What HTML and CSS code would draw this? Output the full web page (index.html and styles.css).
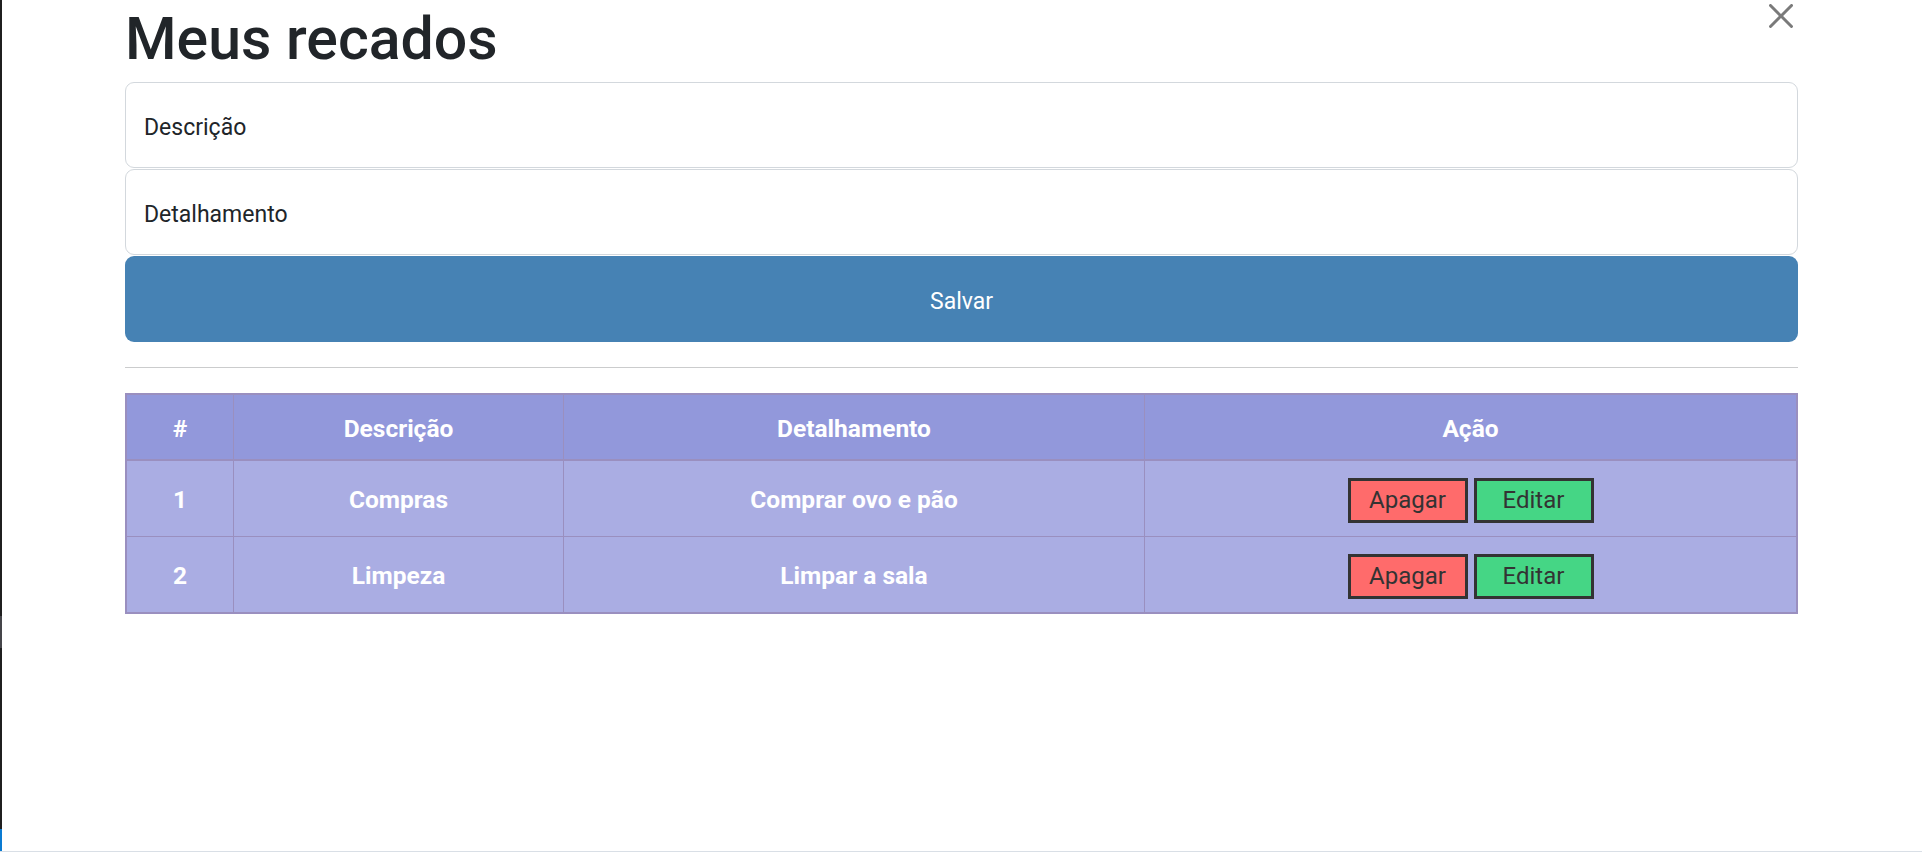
FILE: index.html
```html
<!DOCTYPE html>
<html lang="pt-BR">
<head>
<meta charset="utf-8">
<title>Meus recados</title>
<link rel="stylesheet" href="styles.css">
</head>
<body>
<div class="window">
  <div class="edge">
    <span class="edge-top"></span>
    <span class="edge-thumb"></span>
    <span class="edge-fill"></span>
    <span class="edge-blue"></span>
  </div>
  <main class="page">
    <div class="container">
      <header class="header">
        <h1 class="title">Meus recados</h1>
        <button class="btn-close" type="button" aria-label="Fechar">
          <svg width="24" height="24" viewBox="0 0 16 16" aria-hidden="true"><path fill="#000" fill-opacity="0.52" d="M.293.293a1 1 0 0 1 1.414 0L8 6.586 14.293.293a1 1 0 1 1 1.414 1.414L9.414 8l6.293 6.293a1 1 0 0 1-1.414 1.414L8 9.414l-6.293 6.293a1 1 0 0 1-1.414-1.414L6.586 8 .293 1.707a1 1 0 0 1 0-1.414z"/></svg>
        </button>
      </header>
      <form class="form">
        <div class="field">
          <input class="field-input" id="descricao" type="text">
          <label class="field-label" for="descricao">Descrição</label>
        </div>
        <div class="field">
          <input class="field-input" id="detalhamento" type="text">
          <label class="field-label" for="detalhamento">Detalhamento</label>
        </div>
        <button class="btn-save" type="button">Salvar</button>
      </form>
      <hr class="divider">
      <table class="table">
        <colgroup>
          <col class="col-id">
          <col class="col-desc">
          <col class="col-det">
          <col>
        </colgroup>
        <thead>
          <tr class="head-row">
            <th>#</th>
            <th>Descrição</th>
            <th>Detalhamento</th>
            <th>Ação</th>
          </tr>
        </thead>
        <tbody>
          <tr class="body-row">
            <td>1</td>
            <td>Compras</td>
            <td>Comprar ovo e pão</td>
            <td><div class="actions"><button class="btn btn-delete" type="button">Apagar</button><button class="btn btn-edit" type="button">Editar</button></div></td>
          </tr>
          <tr class="body-row">
            <td>2</td>
            <td>Limpeza</td>
            <td>Limpar a sala</td>
            <td><div class="actions"><button class="btn btn-delete" type="button">Apagar</button><button class="btn btn-edit" type="button">Editar</button></div></td>
          </tr>
        </tbody>
      </table>
    </div>
  </main>
</div>
</body>
</html>
```

FILE: styles.css
```css
html, body {
  margin: 0;
  padding: 0;
  background: #ffffff;
}

body {
  font-family: Roboto, "Liberation Sans", sans-serif;
  color: #212529;
}

.window {
  display: flex;
  height: 852px;
  box-sizing: border-box;
  border-bottom: 1px solid #d9dfe6;
  overflow: hidden;
}

.edge {
  width: 2px;
  flex-shrink: 0;
  display: flex;
  flex-direction: column;
}

.edge-top {
  height: 616px;
  background: #1f1f1f;
}

.edge-thumb {
  height: 32px;
  background: #45454a;
}

.edge-fill {
  flex: 1;
  background: #1f1f1f;
}

.edge-blue {
  height: 22px;
  background: #0a7bd2;
}

.page {
  flex: 1;
  min-width: 0;
}

.container {
  width: 1673px;
  margin-left: 123px;
}

.header {
  display: flex;
  justify-content: space-between;
  align-items: flex-start;
  padding-top: 3px;
  margin-bottom: 7px;
}

.title {
  margin: 0;
  font-size: 59px;
  line-height: 72px;
  font-weight: 500;
  color: #212529;
}

.btn-close {
  margin: 1px 5px 0 0;
  padding: 0;
  border: 0;
  background: none;
  width: 24px;
  height: 24px;
  cursor: pointer;
}

.btn-close svg {
  display: block;
}

.form {
  display: flex;
  flex-direction: column;
  gap: 1px;
  margin: 0;
}

.field {
  position: relative;
  height: 86px;
  box-sizing: border-box;
  border: 1px solid #d3d8dd;
  border-radius: 9px;
  background: #ffffff;
}

.field-input {
  display: block;
  width: 100%;
  height: 100%;
  box-sizing: border-box;
  border: 0;
  border-radius: 9px;
  background: transparent;
  padding: 0 18px;
  font: 23px Roboto, "Liberation Sans", sans-serif;
  outline: none;
}

.field-label {
  position: absolute;
  top: 0;
  left: 0;
  padding: 28px 18px 0;
  font-size: 23px;
  line-height: 34.5px;
  color: #212529;
  pointer-events: none;
}

.btn-save {
  height: 86px;
  width: 100%;
  border: 0;
  border-radius: 9px;
  background: #4682b4;
  color: #ffffff;
  font: 23px/34.5px Roboto, "Liberation Sans", sans-serif;
  padding: 7px 0 0;
  cursor: pointer;
}

.divider {
  margin: 25px 0;
  border: 0;
  height: 1px;
  background: #cbcccd;
}

.table {
  width: 100%;
  table-layout: fixed;
  border-collapse: separate;
  border-spacing: 0;
  border: 2px solid #9a8fbf;
  background: #aaade3;
  color: #ffffff;
  font-size: 24.5px;
  font-weight: 700;
  line-height: 36px;
}

.col-id { width: 107px; }
.col-desc { width: 330px; }
.col-det { width: 581px; }

.table th,
.table td {
  padding: 3px 0 0;
  text-align: center;
  vertical-align: middle;
  border-right: 1px solid #9a8fbf;
  border-bottom: 1px solid #9a8fbf;
}

.table th:last-child,
.table td:last-child {
  border-right: 0;
}

.table th {
  background: #9298db;
  border-bottom-width: 2px;
}

.head-row {
  height: 66px;
}

.body-row {
  height: 76px;
}

.body-row:last-child {
  height: 75px;
}

.body-row:last-child td {
  border-bottom: 0;
}

.actions {
  display: flex;
  justify-content: center;
  gap: 6px;
}

.btn {
  width: 120px;
  height: 45px;
  box-sizing: border-box;
  border: 3px solid #333333;
  padding: 0;
  font: 400 24px Roboto, "Liberation Sans", sans-serif;
  color: #333333;
  cursor: pointer;
}

.btn-delete {
  background: #ff6b6b;
}

.btn-edit {
  background: #45d685;
}
```
